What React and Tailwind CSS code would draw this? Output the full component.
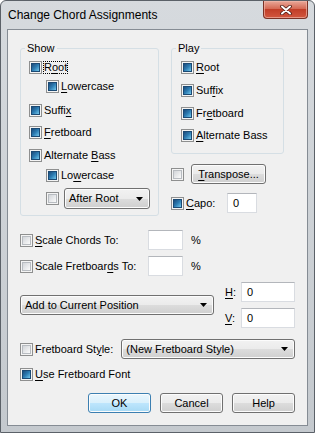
import React from 'react';

// Win7-style checkbox: blue square when set, grey gradient when clear
function Check({ on }) {
  if (on) {
    return (
      <span className="flex h-[13px] w-[13px] shrink-0 items-center justify-center border border-[#8e8f8f] bg-[#f4f4f4]">
        <span className="h-[9px] w-[9px] border border-[#1b4a74] bg-linear-to-br from-[#1c4c7c] via-[#2d7db3] to-[#72c8ec]" />
      </span>
    );
  }
  return (
    <span className="flex h-[13px] w-[13px] shrink-0 items-center justify-center border border-[#8e8f8f] bg-[#f4f4f4]">
      <span className="h-[9px] w-[9px] border border-[#b8bcc1] bg-linear-to-br from-[#d2d5d9] to-[#fbfbfb]" />
    </span>
  );
}

const Mn = ({ children }) => <span className="underline decoration-1 underline-offset-[2px]">{children}</span>;

function Arrow() {
  return (
    <svg width="7" height="4" viewBox="0 0 7 4" className="shrink-0">
      <path d="M0 0h7L3.5 4z" fill="#000" />
    </svg>
  );
}

function Combo({ label, className }) {
  return (
    <div className={`flex h-[20px] items-center justify-between rounded-[3px] border border-[#707070] bg-[linear-gradient(#f2f2f2,#ebebeb_50%,#dddddd_50%,#cfcfcf)] pl-[4px] pr-[6px] shadow-[inset_0_0_0_1px_#fcfcfc] ${className}`}>
      <span>{label}</span>
      <Arrow />
    </div>
  );
}

function Button({ children, primary, className }) {
  const skin = primary
    ? 'border-[#3c7fb1] bg-[linear-gradient(#eaf6fd,#d9f0fc_50%,#bee6fd_50%,#a7d9f5)]'
    : 'border-[#707070] bg-[linear-gradient(#f2f2f2,#ebebeb_50%,#dddddd_50%,#cfcfcf)]';
  return (
    <div className={`flex h-[20px] items-center justify-center rounded-[3px] border shadow-[inset_0_0_0_1px_#fcfcfc] ${skin} ${className}`}>
      {children}
    </div>
  );
}

function Field({ value, className }) {
  return (
    <div className={`h-[20px] border border-[#d9dce1] border-t-[#b3b6bb] bg-white pl-[5px] leading-[18px] ${className}`}>
      {value}
    </div>
  );
}

function CloseButton() {
  return (
    <div className="mr-[6px] flex h-[18px] w-[45px] items-center justify-center rounded-b-[4px] border border-t-0 border-[#7a3226] bg-[linear-gradient(#e9a899,#d56a55_45%,#c13e28_50%,#d2573f)] shadow-[inset_0_0_0_1px_#f0b7a9aa]">
      <svg width="12" height="10" viewBox="0 0 12 10">
        <path d="M2 1.5l8 7M10 1.5l-8 7" stroke="#4a1a12" strokeWidth="3.6" strokeLinecap="round" />
        <path d="M2 1.5l8 7M10 1.5l-8 7" stroke="#ffffff" strokeWidth="2" strokeLinecap="round" />
      </svg>
    </div>
  );
}

export default function App() {
  return (
    <div className="h-[433px] w-[315px] overflow-hidden font-['Liberation_Sans',Arial,sans-serif] text-[11px] leading-[13px] text-black">
      <div className="flex h-full w-full flex-col rounded-t-[6px] border border-[#5b6168] bg-linear-to-b from-[#d6dade] to-[#c4c9ce]">
        {/* Title bar */}
        <div className="flex h-[28px] shrink-0 items-start justify-between">
          <div className="pl-[7px] pt-[7px] text-[12px] leading-[14px]">Change Chord Assignments</div>
          <CloseButton />
        </div>

        {/* Client area */}
        <div className="mx-[6px] mb-[6px] flex flex-1 flex-col border border-[#858c94] bg-[#f0f0f0] px-[12px] pb-[11px] pt-[12px]">
          <div className="flex items-start">
            <fieldset className="w-[139px] rounded-[3px] border border-[#d5dfe5] pb-[6px] pl-[8px]">
              <legend className="ml-[-4px] px-[2px] leading-[13px]">Show</legend>
              <div className="mt-[5px] flex h-[15px] items-center gap-[1px]">
                <Check on />
                <span className="border border-dotted border-black leading-[11px]">R<Mn>o</Mn>ot</span>
              </div>
              <div className="mt-[4px] flex h-[15px] items-center gap-[2px] pl-[17px]">
                <Check on />
                <span><Mn>L</Mn>owercase</span>
              </div>
              <div className="mt-[9px] flex h-[15px] items-center gap-[2px]">
                <Check on />
                <span>Suffi<Mn>x</Mn></span>
              </div>
              <div className="mt-[7px] flex h-[15px] items-center gap-[2px]">
                <Check on />
                <span><Mn>F</Mn>retboard</span>
              </div>
              <div className="mt-[8px] flex h-[15px] items-center gap-[2px]">
                <Check on />
                <span>Alternate <Mn>B</Mn>ass</span>
              </div>
              <div className="mt-[5px] flex h-[15px] items-center gap-[2px] pl-[17px]">
                <Check on />
                <span>Lo<Mn>w</Mn>ercase</span>
              </div>
              <div className="mt-[5px] flex h-[21px] items-center gap-[5px] pl-[17px]">
                <Check />
                <Combo label="After Root" className="h-[21px] w-[86px]" />
              </div>
            </fieldset>

            <div className="ml-[12px] flex w-[113px] flex-col">
              <fieldset className="rounded-[3px] border border-[#d5dfe5] pb-[10px] pl-[9px]">
                <legend className="ml-[-5px] px-[2px] leading-[13px]">Play</legend>
                <div className="mt-[5px] flex h-[15px] items-center gap-[2px]">
                  <Check on />
                  <span><Mn>R</Mn>oot</span>
                </div>
                <div className="mt-[8px] flex h-[15px] items-center gap-[2px]">
                  <Check on />
                  <span>Suf<Mn>f</Mn>ix</span>
                </div>
                <div className="mt-[8px] flex h-[15px] items-center gap-[2px]">
                  <Check on />
                  <span>Fr<Mn>e</Mn>tboard</span>
                </div>
                <div className="mt-[7px] flex h-[15px] items-center gap-[2px]">
                  <Check on />
                  <span><Mn>A</Mn>lternate Bass</span>
                </div>
              </fieldset>
              <div className="mt-[10px] flex h-[20px] items-center">
                <Check />
                <Button className="ml-[7px] w-[75px]"><span><Mn>T</Mn>ranspose...</span></Button>
              </div>
              <div className="mt-[9px] flex h-[20px] items-center">
                <Check on />
                <span className="ml-[2px] w-[41px]"><Mn>C</Mn>apo:</span>
                <Field value="0" className="w-[30px]" />
              </div>
            </div>
          </div>

          <div className="mt-[14px] flex h-[20px] items-center">
            <Check />
            <span className="ml-[2px] w-[113px]"><Mn>S</Mn>cale Chords To:</span>
            <Field value="" className="w-[35px]" />
            <span className="ml-[8px]">%</span>
          </div>
          <div className="mt-[6px] flex h-[20px] items-center">
            <Check />
            <span className="ml-[2px] w-[113px]">Scale Fretboar<Mn>d</Mn>s To:</span>
            <Field value="" className="w-[35px]" />
            <span className="ml-[8px]">%</span>
          </div>

          <div className="mt-[6px] flex items-center">
            <Combo label="Add to Current Position" className="w-[195px]" />
            <div className="ml-[11px] flex flex-col gap-[6px]">
              <div className="flex h-[20px] items-center">
                <span className="w-[16px]"><Mn>H</Mn>:</span>
                <Field value="0" className="w-[54px]" />
              </div>
              <div className="flex h-[20px] items-center">
                <span className="w-[16px]"><Mn>V</Mn>:</span>
                <Field value="0" className="w-[54px]" />
              </div>
            </div>
          </div>

          <div className="mt-[11px] flex h-[20px] items-center">
            <Check />
            <span className="ml-[2px] w-[87px]">Fretboard St<Mn>y</Mn>le:</span>
            <Combo label="(New Fretboard Style)" className="w-[175px]" />
          </div>
          <div className="mt-[8px] flex h-[15px] items-center gap-[2px]">
            <Check on />
            <span><Mn>U</Mn>se Fretboard Font</span>
          </div>

          <div className="mt-[11px] flex justify-end gap-[9px]">
            <Button primary className="w-[63px]">OK</Button>
            <Button className="w-[63px]">Cancel</Button>
            <Button className="w-[63px]">Help</Button>
          </div>
        </div>
      </div>
    </div>
  );
}
